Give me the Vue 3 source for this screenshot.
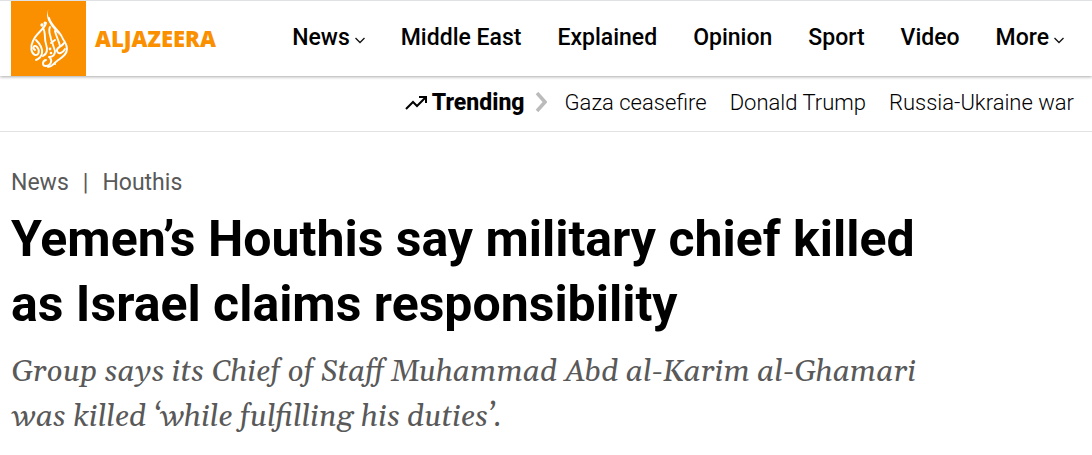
<script setup>
const sections = [
  { label: 'News', menu: true }, { label: 'Middle East' }, { label: 'Explained' },
  { label: 'Opinion' }, { label: 'Sport' }, { label: 'Video' }, { label: 'More', menu: true },
]
const topics = ['Gaza ceasefire', 'Donald Trump', 'Russia-Ukraine war']
</script>

<template>
  <div class="page">
    <header class="header">
      <a class="brand" href="#" aria-label="Al Jazeera">
        <svg class="emblem" viewBox="11 1 75 75" aria-hidden="true">
          <rect x="11" y="1" width="75" height="75" fill="#fa9000" />
          <path d="M48.6 9C46.8 13 48 16 50 20C53 26 57 30 60 36C57 32 52 28 49 22C46.5 17 46.5 13 48.600 9Z" fill="#fff" />
          <g fill="none" stroke="#fff" stroke-width="1.9" stroke-linecap="round" stroke-linejoin="round">
            <path d="M49 18C51 26 59 30 62 37C64 42 67 43 67 49C67 55 61 58 57 61C54 63 52 67 48 67" />
            <path d="M46 23C45 29 36 33 33 41C30 47 31 53 35 55C39 56 40 50 37 47C34 44 32 48 35 50" />
            <path d="M36 40C39 43 43 48 42 53C42 56 39 59 36 60" />
            <path d="M43 28C46 32 44 39 46 44C48 50 47 54 43 56" />
            <path d="M50 27C48 31 50 34 51 39L55 51C55 55 53 57 49 57" />
            <path d="M55 31C56 36 59 41 60 46" />
            <path d="M64 43C62 47 56 47 57 51C58 55 63 53 65 49" />
            <path d="M50 58C53 61 50 66 46 66C42 66 42 61 46 60" />
            <path d="M51 43L55 40" />
          </g>
          <g fill="#fff">
            <circle cx="42" cy="25" r="1.7" /><circle cx="45" cy="23" r="1.5" />
            <circle cx="50" cy="49" r="1.4" /><circle cx="51" cy="53" r="1.3" />
            <circle cx="55" cy="64" r="1" />
          </g>
        </svg>
        <span class="wordmark">ALJAZEERA</span>
      </a>
      <nav class="sections" aria-label="Sections">
        <template v-for="s in sections" :key="s.label">
          <button v-if="s.menu" class="section" type="button">{{ s.label }}<svg class="caret" viewBox="0 0 10 7" aria-hidden="true"><path d="M0.5 1l4.500 4.500 4.500-4.500" fill="none" stroke="#111" stroke-width="1.3" /></svg></button>
          <a v-else class="section" href="#">{{ s.label }}</a>
        </template>
      </nav>
    </header>
    <nav class="trending" aria-label="Trending">
      <strong class="trend-title">
        <svg class="trend-icon" viewBox="0 0 22 14" aria-hidden="true"><path d="M1 13l7-7 4 4 8-8M14 1h7v6" fill="none" stroke="#000" stroke-width="2" /></svg>
        Trending
      </strong>
      <svg class="chevron" viewBox="0 0 12 20" aria-hidden="true"><path d="M2 1l8 9-8 9" fill="none" stroke="#bbb" stroke-width="3.5" /></svg>
      <div class="topics">
        <a v-for="t in topics" :key="t" class="topic" href="#">{{ t }}</a>
      </div>
    </nav>
    <main class="article">
      <div class="crumbs"><a href="#">News</a><span>|</span><a href="#">Houthis</a></div>
      <h1>Yemen’s Houthis say military chief killed as Israel claims responsibility</h1>
      <p class="dek">Group says its Chief of Staff Muhammad Abd al-Karim al-Ghamari was killed ‘while fulfilling his duties’.</p>
    </main>
  </div>
</template>

<style>
body { margin: 0; background: #fff; }
</style>
<style scoped>
.page { font-family: Roboto, sans-serif; color: #000; }
a { color: inherit; text-decoration: none; }
.header { display: flex; justify-content: space-between; padding: 0 28px 0 11px; border-top: 1px solid #dfe1e4; box-shadow: 0 1px 3px #0005; }
.brand { display: flex; align-items: center; gap: 9px; color: #fa9000; }
.emblem { width: 75px; height: 75px; }
.wordmark { padding-bottom: 2px; font: 800 22px "Open Sans", sans-serif; }
.sections { display: flex; align-items: center; gap: 36px; padding-bottom: 2px; }
.section { font: 500 23px/28px Roboto, sans-serif; color: #000; background: none; border: 0; padding: 0; white-space: nowrap; }
.caret { width: 10px; height: 7px; margin-left: 5px; vertical-align: 1px; }
.trending { display: flex; align-items: center; justify-content: flex-end; height: 52px; padding: 0 18px 3px 0; border-bottom: 1px solid #e2e2e2; font-size: 23px; }
.trend-title { font-weight: 800; }
.trend-icon { width: 22px; height: 14px; }
.chevron { width: 12px; height: 20px; margin: 0 18px 0 10px; }
.topics { display: flex; gap: 23px; }
.topic { font-size: 22px; font-weight: 300; }
.article { padding: 37px 11px 20px; max-width: 940px; }
.crumbs { display: flex; gap: 14px; color: #595959; font-size: 23px; line-height: 28px; }
h1 { margin: 10px 0 0; font-size: 50px; line-height: 65px; font-weight: 700; }
.dek { margin: 13px 0 0; font: italic 30px/45px Gelasio, Georgia, "DejaVu Serif", serif; color: #595959; }
</style>
